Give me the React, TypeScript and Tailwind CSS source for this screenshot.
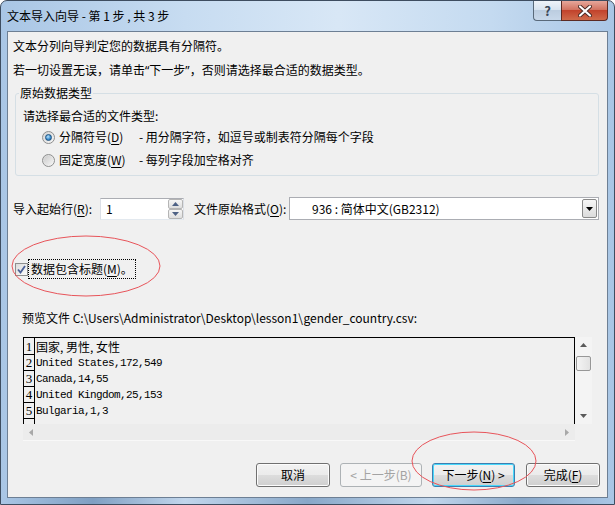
import React from "react";

const sans = "font-['Noto_Sans_CJK_SC','Noto_Sans',sans-serif]";

const Key = ({ children }: { children: React.ReactNode }) => (
  <span className="underline decoration-1 underline-offset-[2px]">{children}</span>
);

const Q = ({ children }: { children: React.ReactNode }) => (
  <span className="font-['Noto_Sans',sans-serif]">{children}</span>
);

const Radio = ({ checked }: { checked?: boolean }) => (
  <span className="flex h-[13px] w-[13px] items-center justify-center rounded-full border border-[#8e8f8f] bg-[linear-gradient(135deg,#d4d4d4,#f7f7f7)]">
    {checked ? (
      <span className="h-[7px] w-[7px] rounded-full border border-[#1d5280] bg-[radial-gradient(circle_at_40%_35%,#b9e3fb,#3e8fd0_55%,#1c5c98)]" />
    ) : (
      <span className="h-[9px] w-[9px] rounded-full bg-[linear-gradient(135deg,#cbcbcb,#f4f4f4)]" />
    )}
  </span>
);

const Tri = ({ dir, color = "#5a5a5a" }: { dir: "up" | "down" | "left" | "right"; color?: string }) => {
  const pts = {
    up: "0,4 7,4 3.5,0",
    down: "0,0 7,0 3.5,4",
    left: "4,0 4,7 0,3.5",
    right: "0,0 0,7 4,3.5",
  }[dir];
  const w = dir === "up" || dir === "down" ? 7 : 4;
  const h = dir === "up" || dir === "down" ? 4 : 7;
  return (
    <svg width={w} height={h} viewBox={`0 0 ${w} ${h}`}>
      <polygon points={pts} fill={color} />
    </svg>
  );
};

const Btn = ({
  children,
  w,
  kind = "normal",
}: {
  children: React.ReactNode;
  w: string;
  kind?: "normal" | "disabled" | "default";
}) => {
  const base = "flex h-[24px] items-center justify-center whitespace-nowrap rounded-[3px] border text-[12px] leading-[16px]";
  const styles = {
    normal:
      "border-[#707070] bg-[linear-gradient(to_bottom,#f2f2f2_0%,#ebebeb_50%,#dddddd_50%,#cfcfcf_100%)] shadow-[inset_0_0_0_1px_#fcfcfc] text-black",
    disabled: "border-[#adb2b5] bg-[#f4f4f4] text-[#a3a3a3]",
    default:
      "border-[#3c7fb1] bg-[linear-gradient(to_bottom,#f2f2f2_0%,#ebebeb_50%,#dddddd_50%,#cfcfcf_100%)] shadow-[inset_0_0_0_1px_#48d8fb] text-black",
  }[kind];
  return <div className={`${base} ${styles} ${w}`}>{children}</div>;
};

const rows = [
  { n: "1", t: "国家, 男性, 女性", cjk: true },
  { n: "2", t: "United States,172,549" },
  { n: "3", t: "Canada,14,55" },
  { n: "4", t: "United Kingdom,25,153" },
  { n: "5", t: "Bulgaria,1,3" },
];

export default function App() {
  return (
    <div className={`relative h-[505px] w-[615px] overflow-hidden bg-white ${sans}`}>
      <div className="flex h-[505px] w-[615px] flex-col rounded-t-[7px] border border-[#3e4d60] bg-[linear-gradient(to_right,#a9c6e5,#c7dcf1_30%,#d8e7f6_55%,#c4daf0_80%,#a9c6e5)]">
        {/* title bar */}
        <div className="flex h-[30px] items-start">
          <div className="whitespace-nowrap pl-[6px] pt-[7px] text-[12px] leading-[16px] text-black">
            文本导入向导 - 第 1 步 , 共 3 步
          </div>
          <div className="ml-auto mr-[6px] flex h-[20px]">
            <div className="flex w-[28px] items-center justify-center rounded-bl-[4px] border border-t-0 border-r-0 border-[#59697a] bg-[linear-gradient(to_bottom,#eef3f9,#d6e2ef_50%,#bccde0_50%,#c8d8ea)] text-[13px] font-bold leading-none text-[#3a4656]">
              ?
            </div>
            <div className="flex w-[47px] items-center justify-center rounded-br-[4px] border border-t-0 border-[#5b2a23] bg-[linear-gradient(to_bottom,#e6a79b,#d27462_45%,#c2432c_50%,#cf6a4a)]">
              <svg width="14" height="12" viewBox="0 0 14 12">
                <path d="M2 1.5 L12 10.5 M12 1.5 L2 10.5" stroke="#4a2a24" strokeWidth="4" strokeLinecap="round" />
                <path d="M2 1.5 L12 10.5 M12 1.5 L2 10.5" stroke="#ffffff" strokeWidth="2.2" strokeLinecap="round" />
              </svg>
            </div>
          </div>
        </div>

        {/* client */}
        <div className="mx-[6px] flex h-[467px] flex-col border border-[#6d7f94] bg-[#f0f0f0] text-[12px] leading-[16px] text-black">
          <p className="ml-[5px] mt-[6px] h-[16px]">文本分列向导判定您的数据具有分隔符。</p>
          <p className="ml-[5px] mt-[8px] h-[16px] whitespace-nowrap">
            若一切设置无误，请单击<Q>“</Q>下一步<Q>”</Q>，否则请选择最合适的数据类型。
          </p>

          <fieldset className="ml-[7px] mt-[7px] h-[91px] w-[584px] rounded-[3px] border border-[#d5dfe5]">
            <legend className="ml-[3px] px-[1px] leading-[16px]">原始数据类型</legend>
            <div className="ml-[7px] mt-[7px] h-[16px]">请选择最合适的文件类型:</div>
            <div className="ml-[26px] mt-[5px] flex h-[16px] items-center whitespace-nowrap">
              <Radio checked />
              <span className="ml-[4px] w-[80px]">
                分隔符号(<Key>D</Key>)
              </span>
              <span>- 用分隔字符，如逗号或制表符分隔每个字段</span>
            </div>
            <div className="ml-[26px] mt-[7px] flex h-[16px] items-center whitespace-nowrap">
              <Radio />
              <span className="ml-[4px] w-[80px]">
                固定宽度(<Key>W</Key>)
              </span>
              <span>- 每列字段加空格对齐</span>
            </div>
          </fieldset>

          <div className="ml-[5px] mt-[21px] flex h-[23px] items-center whitespace-nowrap">
            <span className="w-[87px] shrink-0">
              导入起始行(<Key>R</Key>):
            </span>
            <div className="flex h-[22px] w-[84px] shrink-0 border border-[#abadb3] border-b-[#e3e9ef] border-x-[#dbdfe6] bg-white">
              <span className="flex-1 pl-[5px] leading-[20px]">1</span>
              <div className="flex w-[15px] flex-col">
                <div className="flex h-[10px] items-center justify-center rounded-[2px] border border-[#b5b5b5] bg-[linear-gradient(to_bottom,#f6f6f6,#dedede)]">
                  <svg width="7" height="4" viewBox="0 0 7 4">
                    <polygon points="0,4 7,4 3.5,0" fill="#4d6185" />
                  </svg>
                </div>
                <div className="flex h-[10px] items-center justify-center rounded-[2px] border border-[#b5b5b5] bg-[linear-gradient(to_bottom,#f6f6f6,#dedede)]">
                  <svg width="7" height="4" viewBox="0 0 7 4">
                    <polygon points="0,0 7,0 3.5,4" fill="#4d6185" />
                  </svg>
                </div>
              </div>
            </div>
            <span className="ml-[10px] w-[95px] shrink-0">
              文件原始格式(<Key>O</Key>):
            </span>
            <div className="flex h-[23px] w-[310px] shrink-0 items-center border border-[#abadb3] bg-white">
              <span className="flex-1 pl-[22px]">936 : 简体中文(GB2312)</span>
              <div className="mr-[1px] flex h-[19px] w-[15px] items-center justify-center rounded-[2px] border border-[#8a8a8a] bg-[linear-gradient(to_bottom,#f6f6f6,#dcdcdc)]">
                <Tri dir="down" color="#000" />
              </div>
            </div>
          </div>

          <div className="ml-[7px] mt-[39px] flex h-[20px] items-center whitespace-nowrap">
            <span className="flex h-[13px] w-[13px] items-center justify-center border border-[#8e8f8f] bg-[linear-gradient(135deg,#dcdcdc,#fbfbfb)]">
              <svg width="9" height="9" viewBox="0 0 9 9">
                <path d="M1 4.5 L3.5 7.5 L8 1" fill="none" stroke="#4a5f97" strokeWidth="1.8" />
              </svg>
            </span>
            <span className="h-[20px] border border-dotted border-black px-[2px] leading-[18px]">
              数据包含标题(<Key>M</Key>)。
            </span>
          </div>

          <p className="ml-[14px] mt-[31px] h-[16px] whitespace-nowrap">
            预览文件 C:\Users\Administrator\Desktop\lesson1\gender_country.csv:
          </p>

          <div className="ml-[15px] mt-[11px] grid w-[569px] grid-cols-[552px_17px] grid-rows-[87px_17px]">
            <div className="overflow-hidden border-x border-t border-black bg-[#f0f0f0]">
              {rows.map((r, i) => (
                <div key={r.n} className={`flex whitespace-pre ${i === 0 ? "h-[17px]" : "h-[16px]"}`}>
                  <div className="flex w-[11px] items-end justify-center border-b border-r border-black font-['Liberation_Serif',serif] text-[13px] leading-[14px]">
                    {r.n}
                  </div>
                  <div
                    className={
                      r.cjk
                        ? "pl-[1px] text-[12px] leading-[17px]"
                        : "pl-[1px] font-['Liberation_Mono',monospace] text-[11px] leading-[16px] tracking-[-0.6px]"
                    }
                  >
                    {r.t}
                  </div>
                </div>
              ))}
              <div className="flex h-[10px]">
                <div className="w-[11px] border-r border-black" />
              </div>
            </div>
            <div className="flex flex-col items-center bg-[#f4f4f4]">
              <div className="mt-[6px]">
                <Tri dir="up" />
              </div>
              <div className="mt-[9px] h-[15px] w-[15px] rounded-[2px] border border-[#979797] bg-[linear-gradient(to_right,#f4f4f4,#e2e2e2)]" />
              <div className="flex-1" />
              <div className="mb-[6px]">
                <Tri dir="down" />
              </div>
            </div>
            <div className="flex items-center justify-between border-b border-[#f8f8f8] bg-[#ececec] px-[6px]">
              <Tri dir="left" color="#a8a8a8" />
              <Tri dir="right" color="#a8a8a8" />
            </div>
            <div className="bg-[#f0f0f0]" />
          </div>

          <div className="mt-[22px] flex pr-[7px]">
            <div className="ml-auto flex">
              <Btn w="w-[74px]">取消</Btn>
              <div className="w-[10px]" />
              <Btn w="w-[82px]" kind="disabled">
                &lt; 上一步(B)
              </Btn>
              <div className="w-[10px]" />
              <Btn w="w-[83px]" kind="default">
                下一步(<Key>N</Key>)&nbsp;&gt;
              </Btn>
              <div className="w-[11px]" />
              <Btn w="w-[74px]">
                完成(<Key>F</Key>)
              </Btn>
            </div>
          </div>
        </div>

        {/* bottom frame */}
        <div className="flex-1 bg-[linear-gradient(to_right,#a9c6e5,#7f9fc2_15%,#c1d6ec_30%,#88a7c8_50%,#c1d6ec_70%,#8aa9ca_85%,#a9c6e5)]" />
      </div>

      {/* red annotation ellipses */}
      <svg className="pointer-events-none absolute left-0 top-0" width="615" height="505">
        <ellipse cx="86" cy="266" rx="74" ry="30" fill="none" stroke="#e8545a" strokeWidth="1" />
        <ellipse cx="474" cy="461" rx="62" ry="29" fill="none" stroke="#e8545a" strokeWidth="1" />
      </svg>
    </div>
  );
}
